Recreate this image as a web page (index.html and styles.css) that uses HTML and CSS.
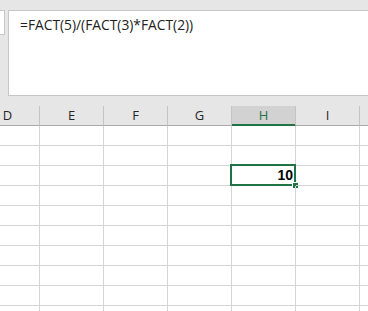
FILE: index.html
```html
<!DOCTYPE html>
<html>
<head>
<meta charset="utf-8">
<link rel="stylesheet" href="styles.css">
</head>
<body>
<div class="app">
  <div class="topband">
    <div class="namebox"></div>
    <div class="formula">=FACT(5)/(FACT(3)*FACT(2))</div>
  </div>
  <div class="grid">
    <div class="hdr">D</div>
    <div class="hdr">E</div>
    <div class="hdr">F</div>
    <div class="hdr">G</div>
    <div class="hdr sel">H</div>
    <div class="hdr">I</div>
    <div class="hdr"></div>

    <div class="cell"></div><div class="cell"></div><div class="cell"></div><div class="cell"></div><div class="cell"></div><div class="cell"></div><div class="cell"></div>
    <div class="cell"></div><div class="cell"></div><div class="cell"></div><div class="cell"></div><div class="cell"></div><div class="cell"></div><div class="cell"></div>
    <div class="cell"></div><div class="cell"></div><div class="cell"></div><div class="cell"></div><div class="cell active"><span class="val">10</span><span class="selbox"></span><span class="handle"></span></div><div class="cell"></div><div class="cell"></div>
    <div class="cell"></div><div class="cell"></div><div class="cell"></div><div class="cell"></div><div class="cell"></div><div class="cell"></div><div class="cell"></div>
    <div class="cell"></div><div class="cell"></div><div class="cell"></div><div class="cell"></div><div class="cell"></div><div class="cell"></div><div class="cell"></div>
    <div class="cell"></div><div class="cell"></div><div class="cell"></div><div class="cell"></div><div class="cell"></div><div class="cell"></div><div class="cell"></div>
    <div class="cell"></div><div class="cell"></div><div class="cell"></div><div class="cell"></div><div class="cell"></div><div class="cell"></div><div class="cell"></div>
    <div class="cell"></div><div class="cell"></div><div class="cell"></div><div class="cell"></div><div class="cell"></div><div class="cell"></div><div class="cell"></div>
    <div class="cell"></div><div class="cell"></div><div class="cell"></div><div class="cell"></div><div class="cell"></div><div class="cell"></div><div class="cell"></div>
    <div class="cell"></div><div class="cell"></div><div class="cell"></div><div class="cell"></div><div class="cell"></div><div class="cell"></div><div class="cell"></div>
  </div>
</div>
</body>
</html>
```
FILE: styles.css
```css
* { box-sizing: border-box; }
html, body { margin: 0; padding: 0; }
body {
  width: 368px;
  height: 311px;
  overflow: hidden;
  background: #ffffff;
  font-family: "Open Sans", "Noto Sans", sans-serif;
}
.app { width: 368px; overflow: hidden; }
.topband {
  height: 106px;
  background: #e6e6e6;
  padding-top: 10px;
  display: flex;
  align-items: flex-start;
}
.namebox {
  flex: none;
  width: 60px;
  height: 25px;
  margin-left: -55px;
  background: #ffffff;
  border: 1px solid #c6c6c6;
}
.formula {
  flex: none;
  width: 420px;
  height: 86px;
  margin-left: 3px;
  background: #ffffff;
  border: 1px solid #c6c6c6;
  padding: 4px 0 0 11px;
  font-size: 13.8px;
  line-height: 19px;
  color: #222222;
  white-space: nowrap;
}
.grid {
  display: grid;
  grid-template-columns: repeat(7, 64px);
  grid-auto-rows: 20px;
  margin-left: -24px;
  width: 448px;
}
.hdr {
  background: #e6e6e6;
  border-right: 1px solid #c4c4c4;
  border-bottom: 1px solid #ababab;
  text-align: center;
  font-size: 13px;
  line-height: 19px;
  color: #262626;
}
.hdr.sel {
  background: #d2d2d2;
  color: #217346;
  border-bottom-color: #217346;
  box-shadow: inset 0 -1px 0 #217346;
}
.cell {
  position: relative;
  border-right: 1px solid #d4d4d4;
  border-bottom: 1px solid #d4d4d4;
}
.val {
  display: block;
  text-align: right;
  padding-right: 2px;
  font-family: "Liberation Sans", Arial, sans-serif;
  font-weight: bold;
  font-size: 14px;
  line-height: 19px;
  color: #000000;
}
.selbox {
  position: absolute;
  left: -2px;
  top: -2px;
  width: 66px;
  height: 22px;
  border: 2px solid #217346;
}
.handle {
  position: absolute;
  left: 60px;
  top: 16px;
  width: 7px;
  height: 7px;
  background: #217346;
  border: 1px solid #ffffff;
}
```
